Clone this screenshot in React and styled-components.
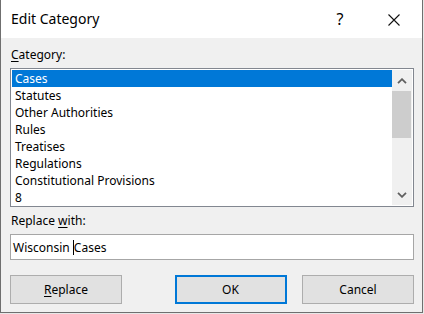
import React from "react";
import styled, { createGlobalStyle } from "styled-components";

const GlobalStyle = createGlobalStyle`
  html, body {
    margin: 0;
    padding: 0;
    background: #e8e8e8;
  }
  body {
    font-family: "Noto Sans", "Open Sans", sans-serif;
    font-size: 12px;
    color: #000;
  }
`;

const categories = [
  "Cases",
  "Statutes",
  "Other Authorities",
  "Rules",
  "Treatises",
  "Regulations",
  "Constitutional Provisions",
  "8",
];

function Chevron({ up }) {
  return (
    <svg width="10" height="6" viewBox="0 0 10 6">
      <path
        d={up ? "M1 5.2 L5 1.2 L9 5.2" : "M1 0.8 L5 4.8 L9 0.8"}
        fill="none"
        stroke="#606060"
        strokeWidth="1.8"
      />
    </svg>
  );
}

function App() {
  return (
    <>
      <GlobalStyle />
      <Dialog>
        <TitleBar>
          <Title>Edit Category</Title>
          <HelpButton>?</HelpButton>
          <CloseButton>
            <svg width="12" height="12" viewBox="0 0 12 12">
              <path d="M0.5 0.5 L11.5 11.5 M11.5 0.5 L0.5 11.5" stroke="#111" strokeWidth="1.1" />
            </svg>
          </CloseButton>
        </TitleBar>
        <Body>
          <Label>
            <u>C</u>ategory:
          </Label>
          <ListBox>
            <Items>
              {categories.map((c, i) => (
                <Item key={c} $selected={i === 0}>
                  {c}
                </Item>
              ))}
            </Items>
            <ScrollBar>
              <ArrowButton>
                <Chevron up />
              </ArrowButton>
              <Thumb />
              <Track />
              <ArrowButton>
                <Chevron />
              </ArrowButton>
            </ScrollBar>
          </ListBox>
          <Label $top={6}>
            Replace <u>w</u>ith:
          </Label>
          <TextBox>
            Wisconsin <Caret />Cases
          </TextBox>
          <ButtonRow>
            <Button>
              <u>R</u>eplace
            </Button>
            <Button $default>OK</Button>
            <Button>Cancel</Button>
          </ButtonRow>
        </Body>
      </Dialog>
    </>
  );
}

export default App;

const Dialog = styled.div`
  width: 423px;
  height: 313px;
  box-sizing: border-box;
  border: 1px solid #6f6f6f;
  border-top: none;
  display: flex;
  flex-direction: column;
  background: #f0f0f0;
`;

const TitleBar = styled.div`
  height: 38px;
  background: #fff;
  display: flex;
  align-items: center;
  padding-left: 10px;
  flex-shrink: 0;
`;

const Title = styled.div`
  font-size: 14px;
  flex: 1;
  margin-top: -1px;
`;

const HelpButton = styled.div`
  width: 46px;
  font-size: 16px;
  text-align: center;
  margin-right: 8px;
`;

const CloseButton = styled.div`
  width: 46px;
  display: flex;
  justify-content: center;
  margin-right: 5px;
  margin-top: 2px;
`;

const Body = styled.div`
  flex: 1;
  padding: 9px 8px 0 9px;
  display: flex;
  flex-direction: column;
`;

const Label = styled.div`
  line-height: 16px;
  height: 16px;
  margin-top: ${(p) => p.$top || 0}px;
  margin-bottom: 5px;
  padding-left: 1px;

  u {
    text-underline-offset: 2px;
  }
`;

const ListBox = styled.div`
  height: 139px;
  box-sizing: border-box;
  border: 1px solid #828790;
  background: #fff;
  padding: 1px;
  display: flex;
`;

const Items = styled.div`
  flex: 1;
  display: flex;
  flex-direction: column;
`;

const Item = styled.div`
  height: 17px;
  line-height: 18px;
  padding-left: 3px;
  white-space: nowrap;
  background: ${(p) => (p.$selected ? "#0078d7" : "transparent")};
  color: ${(p) => (p.$selected ? "#fff" : "#000")};
`;

const ScrollBar = styled.div`
  width: 20px;
  background: #f0f0f0;
  display: flex;
  flex-direction: column;
`;

const ArrowButton = styled.div`
  height: 21px;
  display: flex;
  align-items: center;
  justify-content: center;
  padding-right: 1px;
`;

const Thumb = styled.div`
  height: 47px;
  width: 19px;
  background: #cdcdcd;
`;

const Track = styled.div`
  flex: 1;
`;

const TextBox = styled.div`
  height: 26px;
  box-sizing: border-box;
  border: 1px solid #a6a6a6;
  background: #fff;
  display: flex;
  align-items: center;
  padding-left: 2px;
  white-space: pre;
`;

const Caret = styled.span`
  display: inline-block;
  width: 1px;
  height: 15px;
  background: #000;
`;

const ButtonRow = styled.div`
  display: flex;
  justify-content: space-between;
  margin-top: 15px;
`;

const Button = styled.div`
  width: 112px;
  height: 29px;
  box-sizing: border-box;
  background: #e1e1e1;
  border: ${(p) => (p.$default ? "2px solid #0078d7" : "1px solid #adadad")};
  display: flex;
  align-items: center;
  justify-content: center;
  margin-left: ${(p) => (p.$default ? "52px" : "0")};
  margin-right: ${(p) => (p.$default ? "15px" : "0")};

  u {
    text-underline-offset: 2px;
  }
`;
